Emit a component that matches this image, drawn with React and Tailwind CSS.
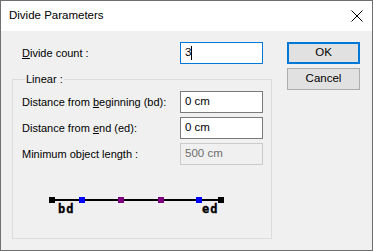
import React from "react";

function Field({ value, disabled, caret }) {
  return (
    <div
      className={
        "w-[83px] h-[22px] flex items-center pl-[4px] text-[11.5px] " +
        (disabled
          ? "border border-[#cccccc] bg-[#f0f0f0] text-[#6d6d6d]"
          : caret
          ? "border border-[#0078d7] bg-white text-black"
          : "border border-[#7a7a7a] bg-white text-black")
      }
    >
      <span>{value}</span>
      {caret && <span className="w-px h-[14px] bg-black" />}
    </div>
  );
}

function Row({ label, children }) {
  return (
    <div className="flex items-center h-[22px]">
      <span className="w-[158px] text-[11px] text-black">{label}</span>
      {children}
    </div>
  );
}

function Diagram() {
  const squares = [
    { x: 52, c: "#000000" },
    { x: 82, c: "#0000ff" },
    { x: 121, c: "#800080" },
    { x: 161, c: "#800080" },
    { x: 199, c: "#0000ff" },
    { x: 221, c: "#000000" },
  ];
  return (
    <svg width="240" height="30" viewBox="12 193 240 30" className="block">
      <line x1="52" y1="204" x2="221" y2="204" stroke="#000" strokeWidth="2" />
      {squares.map((s, i) => (
        <rect key={i} x={s.x - 3} y="201" width="6" height="6" fill={s.c} />
      ))}
      <text x="58" y="217" fontFamily="'DejaVu Sans Mono', monospace" fontWeight="bold" fontSize="12" letterSpacing="1" fill="#000" stroke="#000" strokeWidth="0.3">
        bd
      </text>
      <text x="202" y="217" fontFamily="'DejaVu Sans Mono', monospace" fontWeight="bold" fontSize="12" letterSpacing="1" fill="#000" stroke="#000" strokeWidth="0.3">
        ed
      </text>
    </svg>
  );
}

export default function App() {
  return (
    <div
      className="w-[373px] h-[251px] border border-[#6f6f6f] bg-[#f0f0f0] flex flex-col text-black"
      style={{ fontFamily: "'Segoe UI', 'Liberation Sans', Arial, sans-serif" }}
    >
      <div className="h-[30px] bg-white flex items-center justify-between pl-[8px] pr-[9px]">
        <span className="text-[11.5px]">Divide Parameters</span>
        <svg width="12" height="12" viewBox="0 0 12 12">
          <path d="M0.5 0.5 L11.5 11.5 M11.5 0.5 L0.5 11.5" stroke="#000" strokeWidth="1" />
        </svg>
      </div>

      <div className="flex pl-[11px] pt-[11px]">
        <div className="w-[260px] flex flex-col">
          <div className="pl-[10px]">
            <Row
              label={
                <>
                  <u>D</u>ivide count :
                </>
              }
            >
              <Field value="3" caret />
            </Row>
          </div>

          <fieldset className="mt-[7px] h-[168px] border border-[#dcdcdc] pl-[9px]">
            <legend className="text-[11px] leading-[16px] ml-[3px] px-[1px] text-black">Linear :</legend>
            <div className="flex flex-col gap-[4px] mt-[4px]">
              <Row
                label={
                  <>
                    Distance from <u>b</u>eginning (bd):
                  </>
                }
              >
                <Field value="0 cm" />
              </Row>
              <Row
                label={
                  <>
                    Distance from <u>e</u>nd (ed):
                  </>
                }
              >
                <Field value="0 cm" />
              </Row>
              <Row label="Minimum object length :">
                <Field value="500 cm" disabled />
              </Row>
            </div>
            <div className="-ml-[10px] mt-[24px]">
              <Diagram />
            </div>
          </fieldset>
        </div>

        <div className="ml-[15px] flex flex-col gap-[4px]">
          <button className="w-[73px] h-[22px] border-2 border-[#0078d7] bg-[#e1e1e1] text-[11.5px] flex items-center justify-center">
            OK
          </button>
          <button className="w-[73px] h-[22px] border border-[#adadad] bg-[#e1e1e1] text-[11.5px] flex items-center justify-center">
            Cancel
          </button>
        </div>
      </div>
    </div>
  );
}
